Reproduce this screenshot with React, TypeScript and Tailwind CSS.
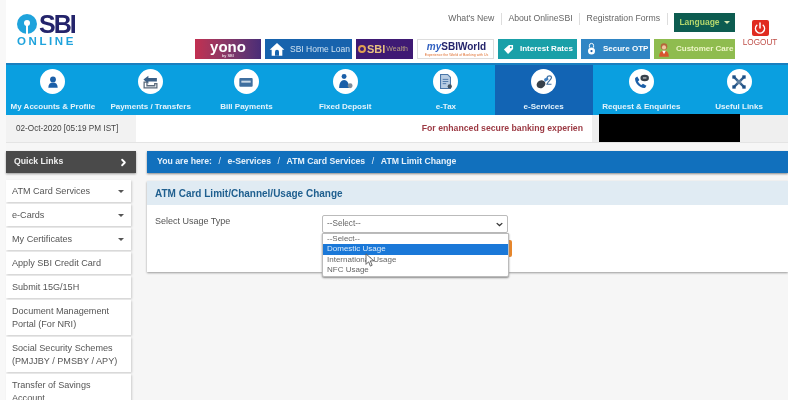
import { ChevronRight, Power } from 'lucide-react';
import type { ReactNode } from 'react';

const blue = '#1b5fa8';

const navItems: { label: string; icon: ReactNode; active?: boolean; cls: string }[] = [
  {
    label: 'My Accounts & Profile',
    cls: 'pr-1',
    icon: (
      <svg viewBox="0 0 24 24" className="h-[14px] w-[14px]" fill={blue}>
        <circle cx="12" cy="7.5" r="5" />
        <path d="M4 22c0-6 3-9 8-9s8 3 8 9z" />
      </svg>
    ),
  },
  {
    label: 'Payments / Transfers',
    cls: 'pr-1',
    icon: (
      <svg viewBox="0 0 24 24" className="h-[17px] w-[17px]">
        <path d="M2 9l7-5v3h12v5H9v3z" fill="#3b5f86" />
        <path d="M3 13h4v5h11v-3h3v6H3z" fill="none" stroke="#5b6b7c" strokeWidth="1.8" />
      </svg>
    ),
  },
  {
    label: 'Bill Payments',
    cls: 'pr-2',
    icon: (
      <svg viewBox="0 0 24 24" className="h-[16px] w-[16px]">
        <rect x="2" y="6" width="20" height="13" rx="1.5" fill="#3f6f9f" />
        <rect x="5" y="10" width="14" height="3" fill="#c9d8e6" />
      </svg>
    ),
  },
  {
    label: 'Fixed Deposit',
    cls: 'pr-1.5',
    icon: (
      <svg viewBox="0 0 24 24" className="h-[17px] w-[17px]">
        <circle cx="10" cy="5" r="3.5" fill={blue} />
        <path d="M3 21c0-7 3-11 7-11s7 4 7 11z" fill={blue} />
        <circle cx="18.5" cy="18" r="3.5" fill="#7d8b99" />
      </svg>
    ),
  },
  {
    label: 'e-Tax',
    cls: '',
    icon: (
      <svg viewBox="0 0 24 24" className="h-[17px] w-[17px]">
        <path d="M5 2h10l4 4v16H5z" fill="#b9cde3" stroke="#4a76a8" strokeWidth="1.5" />
        <path d="M8 9h8M8 12h8M8 15h5" stroke="#4a76a8" strokeWidth="1.3" />
        <circle cx="18" cy="19" r="3" fill="#44525f" />
      </svg>
    ),
  },
  {
    label: 'e-Services',
    active: true,
    cls: '',
    icon: (
      <svg viewBox="0 0 24 24" className="h-[18px] w-[18px]">
        <ellipse cx="8" cy="15" rx="6" ry="5" fill="#37414b" transform="rotate(-25 8 15)" />
        <path d="M12 8l5-3 1 4-5 3z" fill="#3f7fc0" />
        <path d="M16 6c1-3 6-3 6 0 0 3-5 5-6 9h6" fill="none" stroke="#3f6f9f" strokeWidth="1.6" />
      </svg>
    ),
  },
  {
    label: 'Request & Enquiries',
    cls: '',
    icon: (
      <svg viewBox="0 0 24 24" className="h-[17px] w-[17px]">
        <path d="M3 7l3-2 3 5-2 2c1 2 3 4 5 5l2-2 5 3-2 3C10 22 2 14 3 7z" fill={blue} />
        <ellipse cx="16.5" cy="7" rx="6" ry="4.5" fill="#37414b" />
        <path d="M14 7h5" stroke="#fff" strokeWidth="1.2" />
      </svg>
    ),
  },
  {
    label: 'Useful Links',
    cls: '',
    icon: (
      <svg viewBox="0 0 24 24" className="h-[16px] w-[16px]">
        <path d="M5 5l14 14M19 5L5 19" stroke="#35618f" strokeWidth="3.5" />
        <circle cx="12" cy="12" r="3.5" fill="#5f7f9f" />
        <rect x="2" y="2" width="5" height="5" fill="#1b4f86" />
        <rect x="17" y="2" width="5" height="5" fill="#1b4f86" />
        <rect x="2" y="17" width="5" height="5" fill="#1b4f86" />
        <rect x="17" y="17" width="5" height="5" fill="#1b4f86" />
      </svg>
    ),
  },
];

const sideLinks: { label: string; caret?: boolean; tall?: boolean }[] = [
  { label: 'ATM Card Services', caret: true },
  { label: 'e-Cards', caret: true },
  { label: 'My Certificates', caret: true },
  { label: 'Apply SBI Credit Card' },
  { label: 'Submit 15G/15H' },
  { label: 'Document Management Portal (For NRI)', tall: true },
  { label: 'Social Security Schemes (PMJJBY / PMSBY / APY)', tall: true },
  { label: 'Transfer of Savings Account', tall: true },
];

function Header() {
  return (
    <div className="flex h-[63px] bg-white pl-[11px]">
      <div className="w-[60px] shrink-0 pt-[13px]">
        <div className="flex h-[22px] items-center">
          <svg viewBox="0 0 20 20" className="h-[20px] w-[20px] shrink-0">
            <circle cx="10" cy="10" r="10" fill="#1fa3dc" />
            <circle cx="10" cy="9" r="3" fill="#fff" />
            <rect x="9" y="10" width="2" height="10" fill="#fff" />
          </svg>
          <span className="ml-[2px] text-[25px] leading-none font-bold tracking-[-2px] text-[#24246b]">SBI</span>
        </div>
        <div className="mt-[1px] text-[11.5px] leading-[11px] font-bold tracking-[2.6px] text-[#1fa3dc]">ONLINE</div>
      </div>
      <div className="flex flex-1 flex-col items-end pt-[13px]">
        <div className="flex h-[19px] items-start text-[8.7px] text-[#666]">
          <div className="flex h-[12px] items-center">
            <span>What's New</span>
            <span className="mx-[6.5px] h-[12px] w-px bg-[#ddd]" />
            <span>About OnlineSBI</span>
            <span className="mx-[6.5px] h-[12px] w-px bg-[#ddd]" />
            <span>Registration Forms</span>
            <span className="mx-[6.5px] h-[12px] w-px bg-[#ddd]" />
          </div>
          <span className="flex h-[19px] w-[61px] items-center justify-center gap-[4px] bg-[#0d5c50] text-[8.5px] font-bold text-[#b5d66c]">
            Language
            <span className="h-0 w-0 border-x-[3px] border-t-[3px] border-x-transparent border-t-[#d8e8b0]" />
          </span>
        </div>
        <div className="mt-[7px] flex h-[20px] gap-[4px] text-[8px] whitespace-nowrap text-white">
          <div className="flex w-[66px] flex-col items-center justify-center bg-gradient-to-r from-[#c22f50] to-[#4a2c77] leading-none">
            <span className="text-[15px] leading-[12px] font-bold">yono</span>
            <span className="text-[4px] leading-[5px]">by SBI</span>
          </div>
          <div className="flex w-[87px] items-center gap-[5px] bg-[#1763ad] pl-[4px] text-[8.5px] text-[#cfe2f2]">
            <svg viewBox="0 0 24 24" className="h-[16px] w-[16px] shrink-0">
              <path d="M1 13L12 3l11 10h-3v9H4v-9z" fill="#fff" />
              <path d="M9 22v-6a3 3 0 016 0v6z" fill="#1763ad" />
            </svg>
            SBI Home Loan
          </div>
          <div className="flex w-[57px] items-center gap-[1px] bg-[#3f1a74] pl-[2px]">
            <span className="h-[8px] w-[8px] rounded-full border-[2.5px] border-[#e0a050]" />
            <span className="text-[11px] font-bold text-[#e8c080]">SBI</span>
            <span className="text-[7px] text-[#b9a080]">Wealth</span>
          </div>
          <div className="w-[77px] border border-[#ddd] bg-white pl-[2px] text-center leading-none">
            <div className="text-[10px] leading-[13px] font-bold text-[#24246b]">
              <span className="text-[#2f5fc0] italic">my</span>SBIWorld
            </div>
            <div className="text-[3.5px] leading-[4px] text-[#e07030]">Experience the World of Banking with Us</div>
          </div>
          <div className="flex w-[79px] items-center gap-[6px] bg-[#1aa0a8] pl-[5px] font-bold">
            <svg viewBox="0 0 24 24" className="h-[11px] w-[11px] shrink-0">
              <path d="M2 12L13 2h9v9L11 22z" fill="#fff" />
              <circle cx="17" cy="7" r="2" fill="#1aa0a8" />
            </svg>
            Interest Rates
          </div>
          <div className="flex w-[69px] items-center gap-[7px] bg-[#2f85c4] pl-[6px] font-bold">
            <svg viewBox="0 0 12 20" className="h-[14px] w-[9px] shrink-0">
              <path d="M3 8V5a3 3 0 016 0v3" fill="none" stroke="#fff" strokeWidth="1.4" />
              <circle cx="6" cy="13" r="5" fill="#fff" />
              <circle cx="6" cy="13" r="1.6" fill="#1b5fa8" />
            </svg>
            Secure OTP
          </div>
          <div className="flex w-[81px] items-center gap-[6px] bg-[#8fbc4f] pl-[4px] font-bold text-[#eef6c8]">
            <svg viewBox="0 0 20 24" className="h-[15px] w-[12px] shrink-0">
              <circle cx="10" cy="7" r="5.5" fill="#b5653a" />
              <circle cx="10" cy="8.5" r="3.5" fill="#f0c8a0" />
              <path d="M2 24c0-7 3-10 8-10s8 3 8 10z" fill="#d8562e" />
              <path d="M7 14h6l-3 6z" fill="#fff" />
            </svg>
            Customer Care
          </div>
        </div>
      </div>
      <div className="ml-[8px] mr-[11px] flex w-[34px] shrink-0 flex-col items-center pt-[20px]">
        <span className="flex h-[16px] w-[17px] items-center justify-center rounded-[2px] bg-[#e02b20]">
          <Power className="h-[12px] w-[12px] text-white" strokeWidth={3} />
        </span>
        <span className="mt-[1px] text-[8.2px] leading-[11px] font-medium text-[#c0504a]">LOGOUT</span>
      </div>
    </div>
  );
}

function Nav() {
  return (
    <div className="grid h-[52px] grid-cols-8 border-t-2 border-[#1a7fbf] bg-[#0a9fe0]">
      {navItems.map((item) => (
        <div
          key={item.label}
          className={`flex flex-col items-center pt-[4px] ${item.cls} ${item.active ? 'bg-[#1264b4]' : ''}`}
        >
          <span className="flex h-[25px] w-[25px] items-center justify-center rounded-full bg-white">{item.icon}</span>
          <span className="mt-[7px] text-[8px] leading-[11px] font-bold whitespace-nowrap text-[#e4f3fb]">{item.label}</span>
        </div>
      ))}
    </div>
  );
}

function StatusBar() {
  return (
    <div className="flex h-[28px] items-start border-b border-[#e4e4e4] bg-white">
      <div className="flex h-full w-[130px] items-center bg-[#f2f2f2] pt-px pl-[10px] text-[8.2px] text-[#444]">
        02-Oct-2020 [05:19 PM IST]
      </div>
      <div className="flex h-full w-[456px] items-center justify-end bg-white pt-px pr-[9px] text-[8.7px] font-bold whitespace-nowrap text-[#9c3a44]">
        For enhanced secure banking experien
      </div>
      <div className="h-full flex-1 bg-[#efefef]">
        <div className="-mt-px ml-[7px] h-[28px] w-[141px] bg-black" />
      </div>
    </div>
  );
}

function Sidebar() {
  return (
    <div className="w-[130px] shrink-0">
      <div className="flex h-[22px] items-center justify-between bg-[#4a4a4a] pr-[7px] pl-[8px] text-[8.7px] font-bold text-[#eee] shadow-[0_1px_2px_#999]">
        Quick Links
        <ChevronRight className="h-[11px] w-[11px] text-white" strokeWidth={4} />
      </div>
      <ul className="mt-[7px] flex w-[125px] flex-col gap-[2px]">
        {sideLinks.map((link) => (
          <li
            key={link.label}
            className={`flex items-center justify-between bg-white pr-[7px] pl-[6px] text-[9.1px] leading-[13px] text-[#555] shadow-[1px_1px_2px_#ccc] ${link.tall ? 'h-[35px]' : 'h-[22px]'}`}
          >
            <span>{link.label}</span>
            {link.caret && (
              <span className="h-0 w-0 border-x-[3px] border-t-[3px] border-x-transparent border-t-[#555]" />
            )}
          </li>
        ))}
      </ul>
    </div>
  );
}

function Content() {
  return (
    <div className="flex-1">
      <div className="flex h-[22px] items-center gap-[6.6px] bg-[#1170bd] pl-[10px] text-[8.7px] font-bold whitespace-nowrap text-[#e6f1fa] shadow-[0_1px_2px_#888]">
        <span>You are here:</span>
        <span className="font-normal">/</span>
        <span>e-Services</span>
        <span className="font-normal">/</span>
        <span>ATM Card Services</span>
        <span className="font-normal">/</span>
        <span>ATM Limit Change</span>
      </div>
      <div className="mt-[8px] h-[91px] bg-white shadow-[0_1px_2px_#999]">
        <div className="flex h-[24px] items-center bg-[#e0ebf3] pl-[8px] text-[10px] font-bold text-[#1f5f8f]">
          ATM Card Limit/Channel/Usage Change
        </div>
        <div className="flex pt-[10px] pl-[8px]">
          <div className="w-[167px] text-[9px] leading-[12px] text-[#555]">Select Usage Type</div>
          <div className="relative w-[190px]">
            <div className="flex h-[18px] w-[186px] items-center justify-between rounded-[2px] border border-[#bbb] bg-white px-[4px] text-[8.2px] text-[#666]">
              --Select--
              <svg viewBox="0 0 10 6" className="h-[5px] w-[7px]">
                <path d="M1 1l4 3.5L9 1" fill="none" stroke="#333" strokeWidth="1.8" />
              </svg>
            </div>
            <div className="mt-[7px] ml-auto h-[17px] w-[80px] rounded-[2px] bg-[#e8862a]" />
            <ul className="absolute top-[18px] left-0 w-[187px] rounded-b-[2px] border border-[#bbb] bg-white text-[8px] leading-[10.4px] text-[#666] shadow-[0_1px_2px_#888]">
              <li className="pl-[4px]">--Select--</li>
              <li className="bg-[#1a78d8] pl-[4px] text-[#dcecfa]">Domestic Usage</li>
              <li className="pl-[4px]">International Usage</li>
              <li className="pl-[4px]">NFC Usage</li>
            </ul>
            <svg viewBox="0 0 10 16" className="absolute top-[38px] left-[43px] h-[14px] w-[9px]">
              <path d="M1 1v12l3-3 2 5 2-1-2-5h4z" fill="#fff" stroke="#555" strokeWidth="1" />
            </svg>
          </div>
        </div>
      </div>
    </div>
  );
}

export default function App() {
  return (
    <div className="flex h-[400px] w-[800px] overflow-hidden bg-[#f8f8f8] font-['Liberation_Sans',Arial,sans-serif] blur-[0.4px]">
      <div className="ml-[6px] w-[782px] shrink-0">
        <Header />
        <Nav />
        <StatusBar />
        <div className="flex h-[257px] gap-[11px] bg-[#f6f6f6] pt-[8px]">
          <Sidebar />
          <Content />
        </div>
      </div>
      <div className="flex-1 bg-white" />
    </div>
  );
}
